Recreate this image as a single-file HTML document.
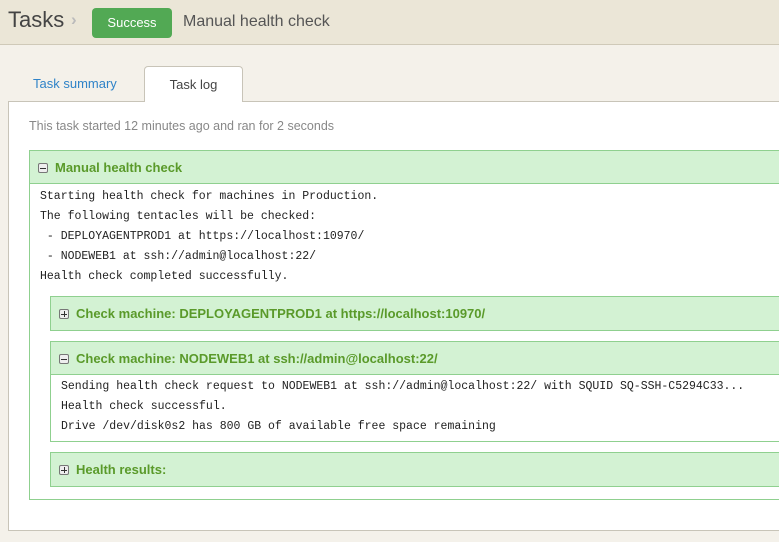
<!DOCTYPE html>
<html><head><style>
*{box-sizing:border-box;margin:0;padding:0}
body{width:779px;height:542px;overflow:hidden;background:#f4f1ea;font-family:"Liberation Sans",sans-serif;position:relative}
.hdr{position:absolute;left:0;top:0;width:779px;height:45px;background:#ebe6d7;border-bottom:1px solid #cfc9b8}
.t{position:absolute;left:8px;top:7px;font-size:22px;color:#444}
.chev{position:absolute;left:71px;top:10px;font-size:17px;color:#bbb;font-weight:bold}
.badge{position:absolute;left:92px;top:8px;width:80px;height:30px;background:#52a954;border-radius:4px;color:#fff;font-size:13px;text-align:center;line-height:30px}
.ttl{position:absolute;left:183px;top:13px;font-size:16px;color:#555}
.tab1{position:absolute;left:33px;top:76px;font-size:13px;color:#2f83c8}
.tab2{position:absolute;left:144px;top:66px;width:99px;height:36px;background:#fff;border:1px solid #c8c4b8;border-bottom:none;border-radius:4px 4px 0 0;font-size:13px;color:#444;text-align:center;line-height:36px;z-index:2}
.panel{position:absolute;left:8px;top:101px;width:790px;height:430px;background:#fff;border:1px solid #c8c4b8}
.info{position:absolute;left:29px;top:119px;font-size:12.5px;color:#888}
.blk{position:absolute;border:1px solid #8fd08f;background:#fff}
.bh{height:33px;background:#d3f2d3;color:#5a9a2a;font-weight:bold;font-size:13px;line-height:33px;padding-left:25px;position:relative;border-bottom:1px solid #8fd08f}
.bh i{position:absolute;left:8px;top:12px;width:10px;height:10px;border:1px solid #777;border-radius:2px;background:#eee}
.bh i:before{content:"";position:absolute;left:1px;top:3.5px;width:6px;height:1px;background:#333}
.bh i.p:after{content:"";position:absolute;left:3.5px;top:1px;width:1px;height:6px;background:#333}
.mono{font-family:"Liberation Mono",monospace;font-size:11.5px;color:#222;line-height:20px;white-space:pre}
</style></head><body>
<div class="hdr"><div class="t">Tasks</div><div class="chev">›</div><div class="badge">Success</div><div class="ttl">Manual health check</div></div>
<div class="tab1">Task summary</div>
<div class="tab2">Task log</div>
<div class="panel"></div>
<div class="info">This task started 12 minutes ago and ran for 2 seconds</div>
<div class="blk" style="left:29px;top:150px;width:760px;height:350px">
<div class="bh"><i></i>Manual health check</div>
<div class="mono" style="padding:3px 0 0 10px">Starting health check for machines in Production.
The following tentacles will be checked:
 - DEPLOYAGENTPROD1 at https://localhost:10970/
 - NODEWEB1 at ssh://admin@localhost:22/
Health check completed successfully.</div>
</div>
<div class="blk" style="left:50px;top:296px;width:740px;height:35px"><div class="bh" style="border:none"><i class="p"></i>Check machine: DEPLOYAGENTPROD1 at https://localhost:10970/</div></div>
<div class="blk" style="left:50px;top:341px;width:740px;height:101px"><div class="bh"><i></i>Check machine: NODEWEB1 at ssh://admin@localhost:22/</div>
<div class="mono" style="padding:2px 0 0 10px">Sending health check request to NODEWEB1 at ssh://admin@localhost:22/ with SQUID SQ-SSH-C5294C33...
Health check successful.
Drive /dev/disk0s2 has 800 GB of available free space remaining</div></div>
<div class="blk" style="left:50px;top:452px;width:740px;height:35px"><div class="bh" style="border:none"><i class="p"></i>Health results:</div></div>
</body></html>
